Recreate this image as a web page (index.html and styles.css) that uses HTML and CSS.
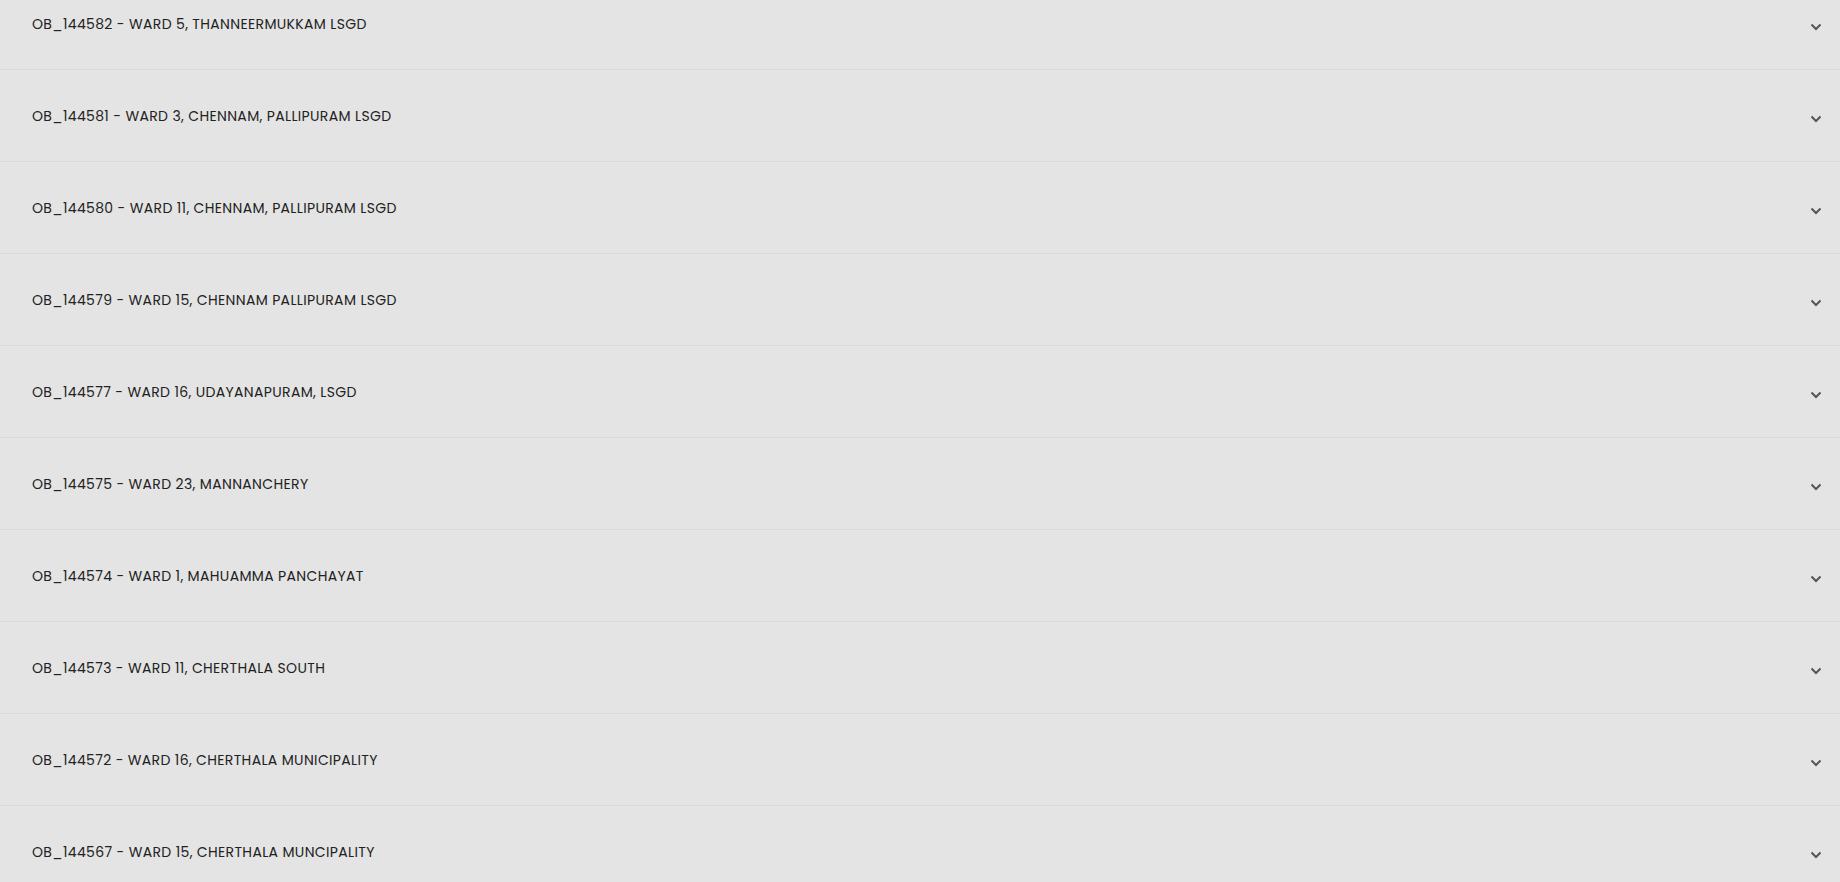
FILE: index.html
```html
<!DOCTYPE html>
<html lang="en">
<head>
  <meta charset="UTF-8" />
  <meta name="viewport" content="width=device-width, initial-scale=1.0"/>
  <title>Observations</title>
  <link rel="stylesheet" href="styles.css">
</head>
<body>

  <div class="accordion">
    <div class="acc-item"><span class="acc-title">OB_144582 - WARD 5, THANNEERMUKKAM LSGD</span><svg class="chev" viewBox="0 0 12 8"><path d="M1.5 1.5 6 6l4.5-4.5"/></svg></div>
    <div class="acc-item"><span class="acc-title">OB_144581 - WARD 3, CHENNAM, PALLIPURAM LSGD</span><svg class="chev" viewBox="0 0 12 8"><path d="M1.5 1.5 6 6l4.5-4.5"/></svg></div>
    <div class="acc-item"><span class="acc-title">OB_144580 - WARD 11, CHENNAM, PALLIPURAM LSGD</span><svg class="chev" viewBox="0 0 12 8"><path d="M1.5 1.5 6 6l4.5-4.5"/></svg></div>
    <div class="acc-item"><span class="acc-title">OB_144579 - WARD 15, CHENNAM PALLIPURAM LSGD</span><svg class="chev" viewBox="0 0 12 8"><path d="M1.5 1.5 6 6l4.5-4.5"/></svg></div>
    <div class="acc-item"><span class="acc-title">OB_144577 - WARD 16, UDAYANAPURAM, LSGD</span><svg class="chev" viewBox="0 0 12 8"><path d="M1.5 1.5 6 6l4.5-4.5"/></svg></div>
    <div class="acc-item"><span class="acc-title">OB_144575 - WARD 23, MANNANCHERY</span><svg class="chev" viewBox="0 0 12 8"><path d="M1.5 1.5 6 6l4.5-4.5"/></svg></div>
    <div class="acc-item"><span class="acc-title">OB_144574 - WARD 1, MAHUAMMA PANCHAYAT</span><svg class="chev" viewBox="0 0 12 8"><path d="M1.5 1.5 6 6l4.5-4.5"/></svg></div>
    <div class="acc-item"><span class="acc-title">OB_144573 - WARD 11, CHERTHALA SOUTH</span><svg class="chev" viewBox="0 0 12 8"><path d="M1.5 1.5 6 6l4.5-4.5"/></svg></div>
    <div class="acc-item"><span class="acc-title">OB_144572 - WARD 16, CHERTHALA MUNICIPALITY</span><svg class="chev" viewBox="0 0 12 8"><path d="M1.5 1.5 6 6l4.5-4.5"/></svg></div>
    <div class="acc-item"><span class="acc-title">OB_144567 - WARD 15, CHERTHALA MUNCIPALITY</span><svg class="chev" viewBox="0 0 12 8"><path d="M1.5 1.5 6 6l4.5-4.5"/></svg></div>
  </div>

</body>
</html>
```

FILE: styles.css
```css
* { box-sizing: border-box; margin: 0; padding: 0; }

body {
  background: #e4e4e4;
  color: #222;
  font-family: 'Poppins', 'Open Sans', sans-serif;
  overflow: hidden;
}

/* page is scrolled a bit, first row is cut */
.accordion {
  margin-top: -22px;
}

.acc-item {
  display: flex;
  align-items: center;
  justify-content: space-between;
  height: 92px;
  padding: 2px 18px 0 32px;
  border-bottom: 1px solid #dadada;
  background: #e4e4e4;
}

.acc-title {
  font-size: 14px;
  letter-spacing: 0.35px;
}

.chev {
  width: 12px;
  height: 8px;
  margin-top: 5px;
  fill: none;
  stroke: #555;
  stroke-width: 2;
}
```
